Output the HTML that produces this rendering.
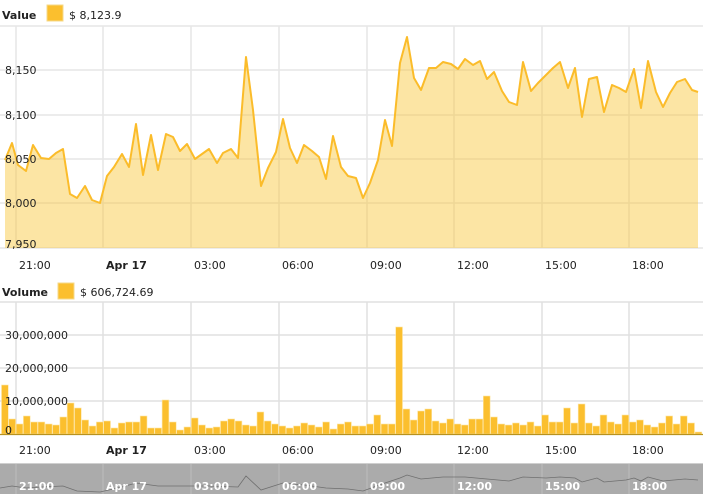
<!DOCTYPE html>
<html><head><meta charset="utf-8"><style>
html,body{margin:0;padding:0;background:#fff;width:703px;height:500px;overflow:hidden}
svg{display:block;font-family:"DejaVu Sans","Liberation Sans",sans-serif}
</style></head><body>
<svg width="703" height="500" viewBox="0 0 703 500" xmlns="http://www.w3.org/2000/svg">
<text x="2" y="19" font-size="11" font-weight="bold" fill="#222">Value</text>
<rect x="47" y="5" width="16" height="16" fill="#fbbf2e" stroke="#f6d98a"/>
<text x="69" y="19" font-size="11" fill="#222">$ 8,123.9</text>
<g stroke="#e6e6e6" stroke-width="1.5">
<line x1="0" y1="26" x2="703" y2="26"/>
<line x1="0" y1="70" x2="703" y2="70"/>
<line x1="0" y1="115" x2="703" y2="115"/>
<line x1="0" y1="159" x2="703" y2="159"/>
<line x1="0" y1="203" x2="703" y2="203"/>
<line x1="0" y1="248" x2="703" y2="248"/>
<line x1="16" y1="26" x2="16" y2="248"/><line x1="103" y1="26" x2="103" y2="248"/>
<line x1="191" y1="26" x2="191" y2="248"/><line x1="279" y1="26" x2="279" y2="248"/>
<line x1="367" y1="26" x2="367" y2="248"/><line x1="454" y1="26" x2="454" y2="248"/>
<line x1="542" y1="26" x2="542" y2="248"/><line x1="629" y1="26" x2="629" y2="248"/>
</g>
<polygon fill="#f9c535" fill-opacity="0.45" points="5,248 5,160 12,143 18,165 26,171 33,145 41,158 49,159 56,153 63,149 70,194 77,198 85,186 92,200 100,203 107,176 114,167 122,154 129,167 136,124 143,175 151,135 158,170 166,134 173,137 180,151 187,144 195,159 202,154 209,149 217,163 223,153 231,149 238,158 246,57 253,110 261,186 268,168 276,152 283,119 290,148 297,163 304,145 312,151 319,157 326,179 333,136 341,167 348,176 356,178 363,198 370,183 378,160 385,120 392,146 400,63 407,37 414,78 421,90 429,68 436,68 443,62 451,64 458,69 465,59 473,65 480,61 487,79 494,72 502,91 509,102 517,105 523,62 531,91 538,83 546,75 553,68 560,62 568,88 575,68 582,117 589,79 597,77 604,112 612,85 619,88 626,92 634,69 641,108 648,61 656,92 663,107 670,93 677,82 685,79 692,90 698,92 698,248"/>
<polyline fill="none" stroke="#fbbc2a" stroke-width="2" stroke-linejoin="round" points="5,160 12,143 18,165 26,171 33,145 41,158 49,159 56,153 63,149 70,194 77,198 85,186 92,200 100,203 107,176 114,167 122,154 129,167 136,124 143,175 151,135 158,170 166,134 173,137 180,151 187,144 195,159 202,154 209,149 217,163 223,153 231,149 238,158 246,57 253,110 261,186 268,168 276,152 283,119 290,148 297,163 304,145 312,151 319,157 326,179 333,136 341,167 348,176 356,178 363,198 370,183 378,160 385,120 392,146 400,63 407,37 414,78 421,90 429,68 436,68 443,62 451,64 458,69 465,59 473,65 480,61 487,79 494,72 502,91 509,102 517,105 523,62 531,91 538,83 546,75 553,68 560,62 568,88 575,68 582,117 589,79 597,77 604,112 612,85 619,88 626,92 634,69 641,108 648,61 656,92 663,107 670,93 677,82 685,79 692,90 698,92"/>
<g font-size="11" fill="#222">
<text x="5" y="74">8,150</text><text x="5" y="119">8,100</text>
<text x="5" y="163">8,050</text><text x="5" y="207">8,000</text>
<text x="5" y="248">7,950</text>
</g>
<g font-size="11" fill="#222">
<text x="19" y="269">21:00</text><text x="106" y="269" font-weight="bold">Apr 17</text>
<text x="194" y="269">03:00</text><text x="282" y="269">06:00</text>
<text x="370" y="269">09:00</text><text x="457" y="269">12:00</text>
<text x="545" y="269">15:00</text><text x="632" y="269">18:00</text>
</g>
<text x="2" y="296" font-size="11" font-weight="bold" fill="#222">Volume</text>
<rect x="58" y="283" width="16" height="16" fill="#fbbf2e" stroke="#f6d98a"/>
<text x="80" y="296" font-size="11" fill="#222">$ 606,724.69</text>
<g stroke="#e0e0e0" stroke-width="1.5">
<line x1="0" y1="302" x2="703" y2="302"/>
<line x1="0" y1="335" x2="703" y2="335"/>
<line x1="0" y1="368" x2="703" y2="368"/>
<line x1="0" y1="401" x2="703" y2="401"/>
<line x1="16" y1="302" x2="16" y2="434"/><line x1="103" y1="302" x2="103" y2="434"/>
<line x1="191" y1="302" x2="191" y2="434"/><line x1="279" y1="302" x2="279" y2="434"/>
<line x1="367" y1="302" x2="367" y2="434"/><line x1="454" y1="302" x2="454" y2="434"/>
<line x1="542" y1="302" x2="542" y2="434"/><line x1="629" y1="302" x2="629" y2="434"/>
</g>
<g fill="#fbbf2e" stroke="#fde7a8" stroke-width="0.6">
<rect x="1.5" y="385" width="6.8" height="49"/><rect x="8.8" y="419" width="6.8" height="15"/><rect x="16.1" y="424" width="6.8" height="10"/><rect x="23.4" y="416" width="6.8" height="18"/><rect x="30.7" y="422" width="6.8" height="12"/><rect x="38" y="422" width="6.8" height="12"/><rect x="45.3" y="424" width="6.8" height="10"/><rect x="52.6" y="425" width="6.8" height="9"/><rect x="59.9" y="417" width="6.8" height="17"/><rect x="67.2" y="403" width="6.8" height="31"/><rect x="74.5" y="408" width="6.8" height="26"/><rect x="81.8" y="420" width="6.8" height="14"/><rect x="89.1" y="426" width="6.8" height="8"/><rect x="96.4" y="422" width="6.8" height="12"/><rect x="103.7" y="421" width="6.8" height="13"/><rect x="111" y="428" width="6.8" height="6"/><rect x="118.3" y="423" width="6.8" height="11"/><rect x="125.6" y="422" width="6.8" height="12"/><rect x="132.9" y="422" width="6.8" height="12"/><rect x="140.2" y="416" width="6.8" height="18"/><rect x="147.5" y="428" width="6.8" height="6"/><rect x="154.8" y="428" width="6.8" height="6"/><rect x="162.1" y="400" width="6.8" height="34"/><rect x="169.4" y="422" width="6.8" height="12"/><rect x="176.7" y="430" width="6.8" height="4"/><rect x="184" y="427" width="6.8" height="7"/><rect x="191.3" y="418" width="6.8" height="16"/><rect x="198.6" y="425" width="6.8" height="9"/><rect x="205.9" y="428" width="6.8" height="6"/><rect x="213.2" y="427" width="6.8" height="7"/><rect x="220.5" y="421" width="6.8" height="13"/><rect x="227.8" y="419" width="6.8" height="15"/><rect x="235.1" y="421" width="6.8" height="13"/><rect x="242.4" y="425" width="6.8" height="9"/><rect x="249.7" y="426" width="6.8" height="8"/><rect x="257" y="412" width="6.8" height="22"/><rect x="264.3" y="421" width="6.8" height="13"/><rect x="271.6" y="424" width="6.8" height="10"/><rect x="278.9" y="426" width="6.8" height="8"/><rect x="286.2" y="428" width="6.8" height="6"/><rect x="293.5" y="426" width="6.8" height="8"/><rect x="300.8" y="423" width="6.8" height="11"/><rect x="308.1" y="425" width="6.8" height="9"/><rect x="315.4" y="427" width="6.8" height="7"/><rect x="322.7" y="422" width="6.8" height="12"/><rect x="330" y="429" width="6.8" height="5"/><rect x="337.3" y="424" width="6.8" height="10"/><rect x="344.6" y="422" width="6.8" height="12"/><rect x="351.9" y="426" width="6.8" height="8"/>
<rect x="359.2" y="426" width="6.8" height="8"/><rect x="366.5" y="424" width="6.8" height="10"/><rect x="373.8" y="415" width="6.8" height="19"/><rect x="381.1" y="424" width="6.8" height="10"/><rect x="388.4" y="424" width="6.8" height="10"/><rect x="395.7" y="327" width="6.8" height="107"/><rect x="403" y="409" width="6.8" height="25"/><rect x="410.3" y="420" width="6.8" height="14"/><rect x="417.6" y="411" width="6.8" height="23"/><rect x="424.9" y="409" width="6.8" height="25"/><rect x="432.2" y="421" width="6.8" height="13"/><rect x="439.5" y="423" width="6.8" height="11"/><rect x="446.8" y="419" width="6.8" height="15"/><rect x="454.1" y="424" width="6.8" height="10"/><rect x="461.4" y="425" width="6.8" height="9"/><rect x="468.7" y="419" width="6.8" height="15"/><rect x="476" y="419" width="6.8" height="15"/><rect x="483.3" y="396" width="6.8" height="38"/><rect x="490.6" y="417" width="6.8" height="17"/><rect x="497.9" y="424" width="6.8" height="10"/><rect x="505.2" y="425" width="6.8" height="9"/><rect x="512.5" y="423" width="6.8" height="11"/><rect x="519.8" y="425" width="6.8" height="9"/><rect x="527.1" y="422" width="6.8" height="12"/><rect x="534.4" y="426" width="6.8" height="8"/><rect x="541.7" y="415" width="6.8" height="19"/><rect x="549" y="422" width="6.8" height="12"/><rect x="556.3" y="422" width="6.8" height="12"/><rect x="563.6" y="408" width="6.8" height="26"/><rect x="570.9" y="423" width="6.8" height="11"/><rect x="578.2" y="404" width="6.8" height="30"/><rect x="585.5" y="423" width="6.8" height="11"/><rect x="592.8" y="426" width="6.8" height="8"/><rect x="600.1" y="415" width="6.8" height="19"/><rect x="607.4" y="422" width="6.8" height="12"/><rect x="614.7" y="424" width="6.8" height="10"/><rect x="622" y="415" width="6.8" height="19"/><rect x="629.3" y="422" width="6.8" height="12"/><rect x="636.6" y="420" width="6.8" height="14"/><rect x="643.9" y="425" width="6.8" height="9"/><rect x="651.2" y="427" width="6.8" height="7"/><rect x="658.5" y="423" width="6.8" height="11"/><rect x="665.8" y="416" width="6.8" height="18"/><rect x="673.1" y="424" width="6.8" height="10"/><rect x="680.4" y="416" width="6.8" height="18"/><rect x="687.7" y="423" width="6.8" height="11"/><rect x="695" y="432" width="6.8" height="2"/>
</g>
<line x1="0" y1="434.5" x2="703" y2="434.5" stroke="#b8921e" stroke-width="1.2"/>
<g font-size="11" fill="#222">
<text x="5" y="339">30,000,000</text><text x="5" y="372">20,000,000</text>
<text x="5" y="405">10,000,000</text><text x="5" y="434">0</text>
</g>
<g font-size="11" fill="#222">
<text x="19" y="454">21:00</text><text x="106" y="454" font-weight="bold">Apr 17</text>
<text x="194" y="454">03:00</text><text x="282" y="454">06:00</text>
<text x="370" y="454">09:00</text><text x="457" y="454">12:00</text>
<text x="545" y="454">15:00</text><text x="632" y="454">18:00</text>
</g>
<rect x="0" y="463" width="703" height="31" fill="#ababab"/>
<line x1="0" y1="463.5" x2="703" y2="463.5" stroke="#cfcfcf"/>
<g stroke="#bdbdbd" stroke-width="1">
<line x1="16" y1="464" x2="16" y2="494"/><line x1="103" y1="464" x2="103" y2="494"/>
<line x1="191" y1="464" x2="191" y2="494"/><line x1="279" y1="464" x2="279" y2="494"/>
<line x1="367" y1="464" x2="367" y2="494"/><line x1="454" y1="464" x2="454" y2="494"/>
<line x1="542" y1="464" x2="542" y2="494"/><line x1="629" y1="464" x2="629" y2="494"/>
</g>
<polyline fill="none" stroke="#6f6f6f" stroke-width="0.8" points="0,488 12,486 26,488 41,487 63,486 77,491 100,492 122,487 136,483 158,486 180,486 209,486 238,487 246,476 261,490 283,483 304,485 326,488 348,489 363,491 385,483 400,478 407,475 421,479 443,477 465,477 487,479 509,481 523,477 546,478 560,477 575,478 582,482 597,478 604,482 626,480 634,478 641,481 648,477 663,481 685,479 698,480"/>
<g font-size="11" font-weight="bold" fill="#fff">
<text x="19" y="490">21:00</text><text x="106" y="490">Apr 17</text>
<text x="194" y="490">03:00</text><text x="282" y="490">06:00</text>
<text x="370" y="490">09:00</text><text x="457" y="490">12:00</text>
<text x="545" y="490">15:00</text><text x="632" y="490">18:00</text>
</g>
</svg>
</body></html>
